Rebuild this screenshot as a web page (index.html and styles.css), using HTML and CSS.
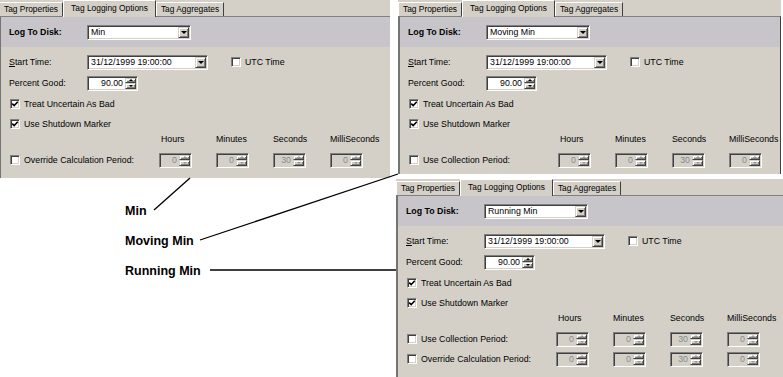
FILE: index.html
```html
<!DOCTYPE html>
<html lang="en">
<head>
    <meta charset="UTF-8">
    <title>Tag Logging Options - Min aggregates</title>
    <link rel="stylesheet" href="styles.css">
</head>
<body>
    <div class="figure">
        <!-- Min -->
        <div class="panel panel-min">
            <div class="tabs">
                <div class="tab tab-props">Tag Properties</div>
                <div class="tab tab-log active">Tag Logging Options</div>
                <div class="tab tab-agg">Tag Aggregates</div>
            </div>
            <div class="sheet">
                <div class="band">
                    <span class="field-label strong">Log To Disk:</span>
                    <div class="combo combo-mode"><span class="combo-text">Min</span><span class="drop"><i class="arrow"></i></span></div>
                </div>
                <div class="body">
                    <div class="row row-start">
                        <span class="field-label"><u>S</u>tart Time:</span>
                        <div class="combo combo-time"><span class="combo-text">31/12/1999 19:00:00</span><span class="drop"><i class="arrow"></i></span></div>
                        <span class="check utc"></span><span>UTC Time</span>
                    </div>
                    <div class="row row-good">
                        <span class="field-label">Percent Good:</span>
                        <div class="spin spin-good"><span class="spin-text">90.00</span><span class="spin-btns"><span class="spin-btn"><i class="arrow up"></i></span><span class="spin-btn"><i class="arrow"></i></span></span></div>
                    </div>
                    <div class="row row-check"><span class="check"><svg viewBox="0 0 8 8"><path d="M1.2 3.6 L3.2 5.6 L6.8 1.8"/></svg></span>Treat Uncertain As Bad</div>
                    <div class="row row-check"><span class="check"><svg viewBox="0 0 8 8"><path d="M1.2 3.6 L3.2 5.6 L6.8 1.8"/></svg></span>Use Shutdown Marker</div>
                    <div class="heads"><span class="cell">Hours</span><span class="cell">Minutes</span><span class="cell">Seconds</span><span class="cell">MilliSeconds</span></div>
                    <div class="row row-period">
                        <span class="period-label"><span class="check"></span>Override Calculation Period:</span>
                        <span class="cell"><span class="spin spin-period"><span class="spin-text">0</span><span class="spin-btns"><span class="spin-btn"><i class="arrow up"></i></span><span class="spin-btn"><i class="arrow"></i></span></span></span></span>
                        <span class="cell"><span class="spin spin-period"><span class="spin-text">0</span><span class="spin-btns"><span class="spin-btn"><i class="arrow up"></i></span><span class="spin-btn"><i class="arrow"></i></span></span></span></span>
                        <span class="cell"><span class="spin spin-period"><span class="spin-text">30</span><span class="spin-btns"><span class="spin-btn"><i class="arrow up"></i></span><span class="spin-btn"><i class="arrow"></i></span></span></span></span>
                        <span class="cell"><span class="spin spin-period"><span class="spin-text">0</span><span class="spin-btns"><span class="spin-btn"><i class="arrow up"></i></span><span class="spin-btn"><i class="arrow"></i></span></span></span></span>
                    </div>
                </div>
            </div>
        </div>

        <!-- Moving Min -->
        <div class="panel panel-moving">
            <div class="tabs">
                <div class="tab tab-props">Tag Properties</div>
                <div class="tab tab-log active">Tag Logging Options</div>
                <div class="tab tab-agg">Tag Aggregates</div>
            </div>
            <div class="sheet">
                <div class="band">
                    <span class="field-label strong">Log To Disk:</span>
                    <div class="combo combo-mode"><span class="combo-text">Moving Min</span><span class="drop"><i class="arrow"></i></span></div>
                </div>
                <div class="body">
                    <div class="row row-start">
                        <span class="field-label"><u>S</u>tart Time:</span>
                        <div class="combo combo-time"><span class="combo-text">31/12/1999 19:00:00</span><span class="drop"><i class="arrow"></i></span></div>
                        <span class="check utc"></span><span>UTC Time</span>
                    </div>
                    <div class="row row-good">
                        <span class="field-label">Percent Good:</span>
                        <div class="spin spin-good"><span class="spin-text">90.00</span><span class="spin-btns"><span class="spin-btn"><i class="arrow up"></i></span><span class="spin-btn"><i class="arrow"></i></span></span></div>
                    </div>
                    <div class="row row-check"><span class="check"><svg viewBox="0 0 8 8"><path d="M1.2 3.6 L3.2 5.6 L6.8 1.8"/></svg></span>Treat Uncertain As Bad</div>
                    <div class="row row-check"><span class="check"><svg viewBox="0 0 8 8"><path d="M1.2 3.6 L3.2 5.6 L6.8 1.8"/></svg></span>Use Shutdown Marker</div>
                    <div class="heads"><span class="cell">Hours</span><span class="cell">Minutes</span><span class="cell">Seconds</span><span class="cell">MilliSeconds</span></div>
                    <div class="row row-period">
                        <span class="period-label"><span class="check"></span>Use Collection Period:</span>
                        <span class="cell"><span class="spin spin-period"><span class="spin-text">0</span><span class="spin-btns"><span class="spin-btn"><i class="arrow up"></i></span><span class="spin-btn"><i class="arrow"></i></span></span></span></span>
                        <span class="cell"><span class="spin spin-period"><span class="spin-text">0</span><span class="spin-btns"><span class="spin-btn"><i class="arrow up"></i></span><span class="spin-btn"><i class="arrow"></i></span></span></span></span>
                        <span class="cell"><span class="spin spin-period"><span class="spin-text">30</span><span class="spin-btns"><span class="spin-btn"><i class="arrow up"></i></span><span class="spin-btn"><i class="arrow"></i></span></span></span></span>
                        <span class="cell"><span class="spin spin-period"><span class="spin-text">0</span><span class="spin-btns"><span class="spin-btn"><i class="arrow up"></i></span><span class="spin-btn"><i class="arrow"></i></span></span></span></span>
                    </div>
                </div>
            </div>
        </div>

        <div class="labels">
            <span>Min</span>
            <span>Moving Min</span>
            <span>Running Min</span>
        </div>

        <!-- Running Min -->
        <div class="panel panel-running">
            <div class="tabs">
                <div class="tab tab-props">Tag Properties</div>
                <div class="tab tab-log active">Tag Logging Options</div>
                <div class="tab tab-agg">Tag Aggregates</div>
            </div>
            <div class="sheet">
                <div class="band">
                    <span class="field-label strong">Log To Disk:</span>
                    <div class="combo combo-mode"><span class="combo-text">Running Min</span><span class="drop"><i class="arrow"></i></span></div>
                </div>
                <div class="body">
                    <div class="row row-start">
                        <span class="field-label"><u>S</u>tart Time:</span>
                        <div class="combo combo-time"><span class="combo-text">31/12/1999 19:00:00</span><span class="drop"><i class="arrow"></i></span></div>
                        <span class="check utc"></span><span>UTC Time</span>
                    </div>
                    <div class="row row-good">
                        <span class="field-label">Percent Good:</span>
                        <div class="spin spin-good"><span class="spin-text">90.00</span><span class="spin-btns"><span class="spin-btn"><i class="arrow up"></i></span><span class="spin-btn"><i class="arrow"></i></span></span></div>
                    </div>
                    <div class="row row-check"><span class="check"><svg viewBox="0 0 8 8"><path d="M1.2 3.6 L3.2 5.6 L6.8 1.8"/></svg></span>Treat Uncertain As Bad</div>
                    <div class="row row-check"><span class="check"><svg viewBox="0 0 8 8"><path d="M1.2 3.6 L3.2 5.6 L6.8 1.8"/></svg></span>Use Shutdown Marker</div>
                    <div class="heads"><span class="cell">Hours</span><span class="cell">Minutes</span><span class="cell">Seconds</span><span class="cell">MilliSeconds</span></div>
                    <div class="row row-period">
                        <span class="period-label"><span class="check"></span>Use Collection Period:</span>
                        <span class="cell"><span class="spin spin-period"><span class="spin-text">0</span><span class="spin-btns"><span class="spin-btn"><i class="arrow up"></i></span><span class="spin-btn"><i class="arrow"></i></span></span></span></span>
                        <span class="cell"><span class="spin spin-period"><span class="spin-text">0</span><span class="spin-btns"><span class="spin-btn"><i class="arrow up"></i></span><span class="spin-btn"><i class="arrow"></i></span></span></span></span>
                        <span class="cell"><span class="spin spin-period"><span class="spin-text">30</span><span class="spin-btns"><span class="spin-btn"><i class="arrow up"></i></span><span class="spin-btn"><i class="arrow"></i></span></span></span></span>
                        <span class="cell"><span class="spin spin-period"><span class="spin-text">0</span><span class="spin-btns"><span class="spin-btn"><i class="arrow up"></i></span><span class="spin-btn"><i class="arrow"></i></span></span></span></span>
                    </div>
                    <div class="row row-period">
                        <span class="period-label"><span class="check"></span>Override Calculation Period:</span>
                        <span class="cell"><span class="spin spin-period"><span class="spin-text">0</span><span class="spin-btns"><span class="spin-btn"><i class="arrow up"></i></span><span class="spin-btn"><i class="arrow"></i></span></span></span></span>
                        <span class="cell"><span class="spin spin-period"><span class="spin-text">0</span><span class="spin-btns"><span class="spin-btn"><i class="arrow up"></i></span><span class="spin-btn"><i class="arrow"></i></span></span></span></span>
                        <span class="cell"><span class="spin spin-period"><span class="spin-text">30</span><span class="spin-btns"><span class="spin-btn"><i class="arrow up"></i></span><span class="spin-btn"><i class="arrow"></i></span></span></span></span>
                        <span class="cell"><span class="spin spin-period"><span class="spin-text">0</span><span class="spin-btns"><span class="spin-btn"><i class="arrow up"></i></span><span class="spin-btn"><i class="arrow"></i></span></span></span></span>
                    </div>
                </div>
            </div>
        </div>

        <!-- callout lines from the labels to their dialogs -->
        <svg class="callouts" width="783" height="377" viewBox="0 0 783 377">
            <line x1="154" y1="210" x2="190" y2="178"/>
            <line x1="200" y1="240" x2="398" y2="174"/>
            <line x1="210" y1="270" x2="396" y2="270"/>
        </svg>
    </div>
</body>
</html>
```

FILE: styles.css
```css
body {
    margin: 0;
    background-color: #fff;
    font-family: "Liberation Sans", Arial, sans-serif;
}

.figure {
    position: relative;
    width: 783px;
    height: 377px;
    overflow: hidden;
    display: grid;
    grid-template-columns: 398px 385px;
    grid-template-rows: 179px 198px;
}

.panel {
    background-color: #d4d0c8;
    color: #000;
    font-size: 8.8px;
    display: flex;
    flex-direction: column;
    overflow: hidden;
}

.panel-min {
    width: 391px;
    height: 178px;
    margin-left: -1px;
}

.panel-moving {
    width: 383px;
    height: 174px;
}

.panel-moving .sheet {
    border-right: 1px solid #404040;
}

.panel-running {
    width: 387px;
    height: 198px;
    margin-left: -2px;
}

/* tabs */
.tabs {
    display: flex;
    align-items: flex-end;
    height: 16px;
    flex-shrink: 0;
    position: relative;
    z-index: 1;
}

.tab {
    box-sizing: border-box;
    height: 14px;
    line-height: 13px;
    text-align: center;
    font-size: 8.4px;
    white-space: nowrap;
    border-top: 1px solid #fff;
    border-left: 1px solid #fff;
    border-right: 1px solid #404040;
}

.tab.active {
    height: 17px;
    line-height: 15px;
    margin-bottom: -1px;
    background-color: #d4d0c8;
}

.tab-props { width: 64px; }
.tab-log { width: 93px; }
.tab-agg { width: 68px; }

.sheet {
    flex: 1;
    border-top: 1px solid #808080;
    border-left: 2px solid #747474;
}

.band {
    height: 30px;
    background-color: #c7c5c9;
    display: flex;
    align-items: center;
}

.field-label {
    box-sizing: border-box;
    width: 86px;
    padding-left: 8px;
    flex-shrink: 0;
    white-space: nowrap;
}

.strong {
    font-weight: bold;
}

.body {
    padding-top: 5px;
    display: flex;
    flex-direction: column;
}

.row {
    display: flex;
    align-items: center;
    height: 20px;
    white-space: nowrap;
}

.row-good { height: 22px; }

.row-check {
    padding-left: 9px;
}

/* sunken 3d edge shared by inputs */
.combo, .spin, .check {
    box-sizing: border-box;
    border: 1px solid;
    border-color: #808080 #fff #fff #808080;
    box-shadow: inset 1px 1px #404040, inset -1px -1px #d4d0c8;
}

.combo {
    height: 15px;
    padding: 1px;
    display: flex;
    background-color: #fff;
}

.combo-mode { width: 104px; }
.combo-time { width: 121px; }

.combo-text, .spin-text {
    flex: 1;
    line-height: 11px;
    white-space: nowrap;
    overflow: hidden;
}

.combo-text {
    padding-left: 2px;
}

/* raised buttons */
.drop, .spin-btn {
    box-sizing: border-box;
    display: flex;
    align-items: center;
    justify-content: center;
    background-color: #d4d0c8;
    border: 1px solid;
    border-color: #d4d0c8 #404040 #404040 #d4d0c8;
    box-shadow: inset 1px 1px #fff, inset -1px -1px #808080;
}

.drop {
    width: 11px;
}

.arrow {
    width: 0;
    height: 0;
    border-left: 3px solid transparent;
    border-right: 3px solid transparent;
    border-top: 3px solid #000;
}

.arrow.up {
    border-top: 0;
    border-bottom: 3px solid #000;
}

.spin {
    height: 15px;
    padding: 1px;
    display: flex;
    background-color: #fff;
}

.spin-good { width: 51px; }

.spin-text {
    text-align: right;
    padding-right: 2px;
}

.spin-btns {
    width: 11px;
    display: flex;
    flex-direction: column;
}

.spin-btn {
    flex: 1;
}

.spin-btn .arrow {
    border-left-width: 2px;
    border-right-width: 2px;
    border-top-width: 2px;
}

.spin-btn .arrow.up {
    border-top-width: 0;
    border-bottom-width: 2px;
}

.spin-period {
    width: 33px;
    background-color: #d4d0c8;
    color: #8a8a8a;
}

.spin-period .arrow {
    border-top-color: #9a9a9a;
}

.spin-period .arrow.up {
    border-bottom-color: #9a9a9a;
}

.check {
    width: 10px;
    height: 10px;
    flex-shrink: 0;
    margin-right: 4px;
    background-color: #fff;
    display: flex;
}

.check svg {
    width: 8px;
    height: 8px;
    fill: none;
    stroke: #000;
    stroke-width: 1.6;
}

.check.utc {
    margin-left: 23px;
}

.heads {
    display: flex;
    height: 10px;
    line-height: 10px;
    padding-left: 158px;
    white-space: nowrap;
}

.heads .cell:first-child {
    padding-left: 2px;
}

.row-period {
    height: 20px;
}

.heads + .row-period {
    margin-top: 6px;
}

.period-label {
    box-sizing: border-box;
    width: 158px;
    padding-left: 9px;
    display: flex;
    align-items: center;
    flex-shrink: 0;
}

.cell {
    box-sizing: border-box;
    width: 57px;
    flex-shrink: 0;
    display: flex;
}

/* captions */
.labels {
    display: flex;
    flex-direction: column;
    padding: 17px 0 0 125px;
    font-size: 12.5px;
    font-weight: bold;
    line-height: 30px;
    color: #000;
}

.callouts {
    position: absolute;
    left: 0;
    top: 0;
    z-index: 2;
    pointer-events: none;
}

.callouts line {
    stroke: #000;
    stroke-width: 1.3;
}
```
